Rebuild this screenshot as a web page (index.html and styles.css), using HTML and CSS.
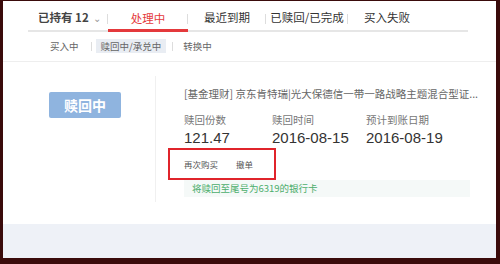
FILE: index.html
```html
<!DOCTYPE html>
<html>
<head>
<meta charset="utf-8">
<link rel="stylesheet" href="styles.css">
</head>
<body>
<div class="frame">
  <div class="tabs">
    <div class="tab tab-first">已持有 12 <span class="chev">⌄</span></div>
    <div class="tab tab-active">处理中</div>
    <div class="tab tab-w78">最近到期</div>
    <div class="tab tab-w82">已赎回/已完成</div>
    <div class="tab tab-last">买入失败</div>
  </div>
  <div class="subtabs">
    <div class="sub">买入中</div>
    <div class="sub sub-active">赎回中/承兑中</div>
    <div class="sub">转换中</div>
  </div>
  <div class="card">
    <div class="left">
      <div class="status">赎回中</div>
    </div>
    <div class="right">
      <div class="title">[基金理财] 京东肯特瑞|光大保德信一带一路战略主题混合型证...</div>
      <div class="stats">
        <div class="stat s1"><div class="label">赎回份数</div><div class="value">121.47</div></div>
        <div class="stat s2"><div class="label">赎回时间</div><div class="value">2016-08-15</div></div>
        <div class="stat"><div class="label">预计到账日期</div><div class="value">2016-08-19</div></div>
      </div>
      <div class="actions">
        <span class="act">再次购买</span>
        <span class="act">撤单</span>
      </div>
      <div class="notice">将赎回至尾号为6319的银行卡</div>
    </div>
  </div>
  <div class="bottom"></div>
</div>
</body>
</html>
```

FILE: styles.css
```css
* { box-sizing: border-box; }
html, body { margin: 0; padding: 0; }
body {
  width: 500px;
  height: 264px;
  background: #3a0b0b;
  font-family: "Noto Sans CJK SC", "Noto Sans", sans-serif;
  overflow: hidden;
}
.frame {
  margin: 1px 4px 0 3px;
  height: 257px;
  background: #fff;
  display: flex;
  flex-direction: column;
}
.tabs {
  display: flex;
  margin: 4px 28px 0 25px;
  height: 27px;
  border-bottom: 2px solid #e6e6e6;
  font-size: 11.5px;
  color: #333;
}
.tab {
  position: relative;
  display: flex;
  align-items: center;
  justify-content: center;
  height: 25px;
  padding-bottom: 1px;
  white-space: nowrap;
}
.tab::after {
  content: "";
  position: absolute;
  right: 0;
  top: 9px;
  width: 1px;
  height: 10px;
  background: #ddd;
}
.tab-last::after { display: none; }
.tab-first { width: 80px; justify-content: flex-start; padding-left: 10px; font-weight: bold; color: #444; }
.chev { font-size: 10px; color: #999; margin-left: 4px; font-weight: normal; }
.tab-active {
  width: 80px;
  color: #e4393c;
  border-bottom: 3px solid #e4393c;
  margin-bottom: -2px;
  height: 27px;
  padding-top: 2px;
}
.tab-w78 { width: 78px; }
.tab-w82 { width: 82px; }
.tab-last { width: 78px; }
.subtabs {
  display: flex;
  align-items: center;
  margin: 7px 0 0 41px;
  height: 14px;
  font-size: 9.5px;
  color: #666;
}
.sub {
  position: relative;
  height: 14px;
  line-height: 14px;
  padding: 0 6px;
  margin-right: 11px;
  white-space: nowrap;
}
.sub::after {
  content: "";
  position: absolute;
  right: -7px;
  top: 3px;
  width: 1px;
  height: 9px;
  background: #ddd;
}
.sub:last-child::after { display: none; }
.sub-active { background: #e9edf3; color: #666; padding: 0 5px; }
.card {
  margin-top: 8px;
  border-top: 1px solid #eee;
  height: 161px;
  display: flex;
}
.left {
  width: 153px;
  flex-shrink: 0;
  padding-left: 46px;
  border-right: 1px solid #f0f0f0;
  margin: 14px 0 20px 0;
  padding-top: 16px;
}
.status {
  width: 72px;
  height: 26px;
  background: #8fb4df;
  color: #fff;
  font-weight: bold;
  font-size: 14px;
  line-height: 26px;
  text-align: center;
  border-radius: 2px;
}
.right {
  padding: 24px 0 0 28px;
  width: 314px;
}
.title {
  font-size: 10.5px;
  color: #666;
  white-space: nowrap;
  height: 16px;
  line-height: 16px;
}
.stats {
  display: flex;
  margin-top: 11px;
}
.stat { display: flex; flex-direction: column; }
.s1 { width: 88px; }
.s2 { width: 94px; }
.label { font-size: 10.5px; color: #777; line-height: 14px; }
.value { font-size: 15px; color: #333; line-height: 18px; margin-top: 2px; font-family: "Liberation Sans", Arial, sans-serif; }
.actions {
  margin: 1px 0 0 -16px;
  width: 108px;
  height: 32px;
  border: 2px solid #e0242b;
  display: flex;
  align-items: center;
  padding-left: 14px;
  font-size: 8.5px;
  color: #555;
  white-space: nowrap;
}
.act { margin-right: 18px; flex-shrink: 0; }
.notice {
  margin-top: 0;
  height: 17px;
  line-height: 17px;
  background: #f5f9f8;
  color: #4cae6c;
  font-size: 9.5px;
  padding-left: 8px;
}
.bottom {
  margin-top: 2px;
  flex: 1;
  background: #eef1f7;
}
```
